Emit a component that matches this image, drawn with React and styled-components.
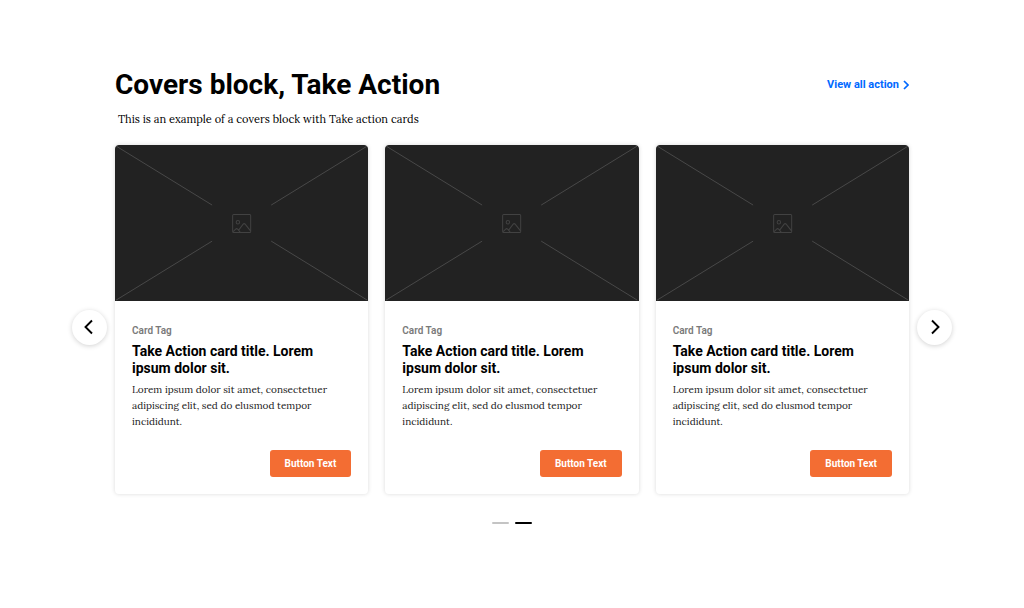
import React, { useState } from 'react';
import styled, { createGlobalStyle } from 'styled-components';

const GlobalStyle = createGlobalStyle`
  * {
    box-sizing: border-box;
  }
  body {
    margin: 0;
    background: #fff;
    color: #000;
    font-family: Roboto, 'Liberation Sans', sans-serif;
  }
`;

const Block = styled.section`
  padding: 67px 72px 0;
`;

const Header = styled.header`
  padding: 0 43px;
`;

const TitleRow = styled.div`
  display: flex;
  align-items: center;
  justify-content: space-between;
`;

const Title = styled.h2`
  margin: 0;
  font-size: 28px;
  line-height: 36px;
  font-weight: 700;
`;

const ViewAll = styled.a`
  display: flex;
  align-items: center;
  gap: 4px;
  color: #0069ff;
  font-size: 11px;
  line-height: 16px;
  font-weight: 700;
  text-decoration: none;
`;

const Description = styled.p`
  margin: 7px 0 17px;
  padding-left: 3px;
  font-family: Lora, 'Liberation Serif', serif;
  font-size: 11px;
  line-height: 18px;
`;

const Carousel = styled.div`
  display: grid;
  grid-template-columns: 35px 1fr 35px;
  column-gap: 8px;
  align-items: center;
`;

const Arrow = styled.button`
  display: flex;
  align-items: center;
  justify-content: center;
  width: 35px;
  height: 35px;
  margin: 15px 0 0;
  padding: 0;
  border: 0;
  border-radius: 50%;
  background: #fff;
  box-shadow: 0 1px 5px rgba(0, 0, 0, 0.18);
  cursor: pointer;
`;

const Cards = styled.ul`
  display: grid;
  grid-template-columns: repeat(3, 1fr);
  gap: 17px;
  margin: 0;
  padding: 0;
  list-style: none;
`;

const Card = styled.li`
  display: flex;
  flex-direction: column;
  overflow: hidden;
  border-radius: 4px;
  background: #fff;
  box-shadow: 0 0 4px rgba(0, 0, 0, 0.15);
`;

const Placeholder = styled.svg`
  display: block;
  width: 100%;
  height: auto;
  border-radius: 3px 3px 0 0;
  background: #222;
`;

const CardBody = styled.div`
  display: flex;
  flex-direction: column;
  padding: 22px 17px 17px;
`;

const Tag = styled.span`
  color: #7a7a7a;
  font-size: 10px;
  line-height: 16px;
  font-weight: 600;
`;

const CardTitle = styled.h3`
  margin: 4px 0 5px;
  font-size: 14px;
  line-height: 17px;
  font-weight: 700;
`;

const Text = styled.p`
  margin: 0 0 20px;
  color: #222;
  font-family: Lora, 'Liberation Serif', serif;
  font-size: 10px;
  line-height: 16px;
`;

const Action = styled.button`
  align-self: flex-end;
  height: 27px;
  padding: 0 15px;
  border: 0;
  border-radius: 3px;
  background: #f36d33;
  color: #fff;
  font-family: inherit;
  font-size: 10px;
  font-weight: 700;
  cursor: pointer;
`;

const Dots = styled.div`
  display: flex;
  justify-content: center;
  gap: 6px;
  padding-top: 28px;
`;

const Dot = styled.button`
  width: 17px;
  height: 2px;
  padding: 0;
  border: 0;
  border-radius: 1px;
  background: ${({ $active }) => ($active ? '#000' : '#c4c4c4')};
  cursor: pointer;
`;

const cards = [1, 2, 3].map(id => ({
  id,
  tag: 'Card Tag',
  title: 'Take Action card title. Lorem ipsum dolor sit.',
  text: 'Lorem ipsum dolor sit amet, consectetuer adipiscing elit, sed do elusmod tempor incididunt.',
  button: 'Button Text',
}));

const ImagePlaceholder = () => (
  <Placeholder viewBox="0 0 253 156" fill="none" aria-hidden="true">
    <path
      d="M1 1L97 60M252 1L156 60M1 155L97 96M252 155L156 96"
      stroke="#4d4d4d"
      strokeWidth="0.9"
    />
    <g stroke="#424242" strokeWidth="1">
      <rect x="117.5" y="69.5" width="18" height="18" rx="1" />
      <circle cx="122.7" cy="77.2" r="1.7" />
      <path d="M118 86.5L120.5 84Q121.5 83 122.5 84L125 87M123.5 85L128 79Q129 78 130 79L135.5 86" />
    </g>
  </Placeholder>
);

const ActionCard = ({ card }) => (
  <Card>
    <ImagePlaceholder />
    <CardBody>
      <Tag>{card.tag}</Tag>
      <CardTitle>{card.title}</CardTitle>
      <Text>{card.text}</Text>
      <Action type="button">{card.button}</Action>
    </CardBody>
  </Card>
);

const App = () => {
  const [page, setPage] = useState(1);

  return (
    <>
      <GlobalStyle />
      <Block>
        <Header>
          <TitleRow>
            <Title>Covers block, Take Action</Title>
            <ViewAll href="#actions">
              View all action
              <svg width="6" height="10" viewBox="0 0 6 10" fill="none" aria-hidden="true">
                <path d="M1 1L5 5L1 9" stroke="currentColor" strokeWidth="1.7" />
              </svg>
            </ViewAll>
          </TitleRow>
          <Description>This is an example of a covers block with Take action cards</Description>
        </Header>
        <Carousel>
          <Arrow type="button" aria-label="Previous" onClick={() => setPage(0)}>
            <svg width="11" height="16" viewBox="0 0 11 16" fill="none" aria-hidden="true">
              <path d="M8 1.5L1.5 8L8 14.5" stroke="#000" strokeWidth="1.9" />
            </svg>
          </Arrow>
          <Cards>
            {cards.map(card => (
              <ActionCard key={card.id} card={card} />
            ))}
          </Cards>
          <Arrow type="button" aria-label="Next" onClick={() => setPage(1)}>
            <svg width="11" height="16" viewBox="0 0 11 16" fill="none" aria-hidden="true">
              <path d="M3 1.5L9.5 8L3 14.5" stroke="#000" strokeWidth="1.9" />
            </svg>
          </Arrow>
        </Carousel>
        <Dots>
          {[0, 1].map(i => (
            <Dot
              key={i}
              type="button"
              aria-label={`Page ${i + 1}`}
              $active={page === i}
              onClick={() => setPage(i)}
            />
          ))}
        </Dots>
      </Block>
    </>
  );
};

export default App;
